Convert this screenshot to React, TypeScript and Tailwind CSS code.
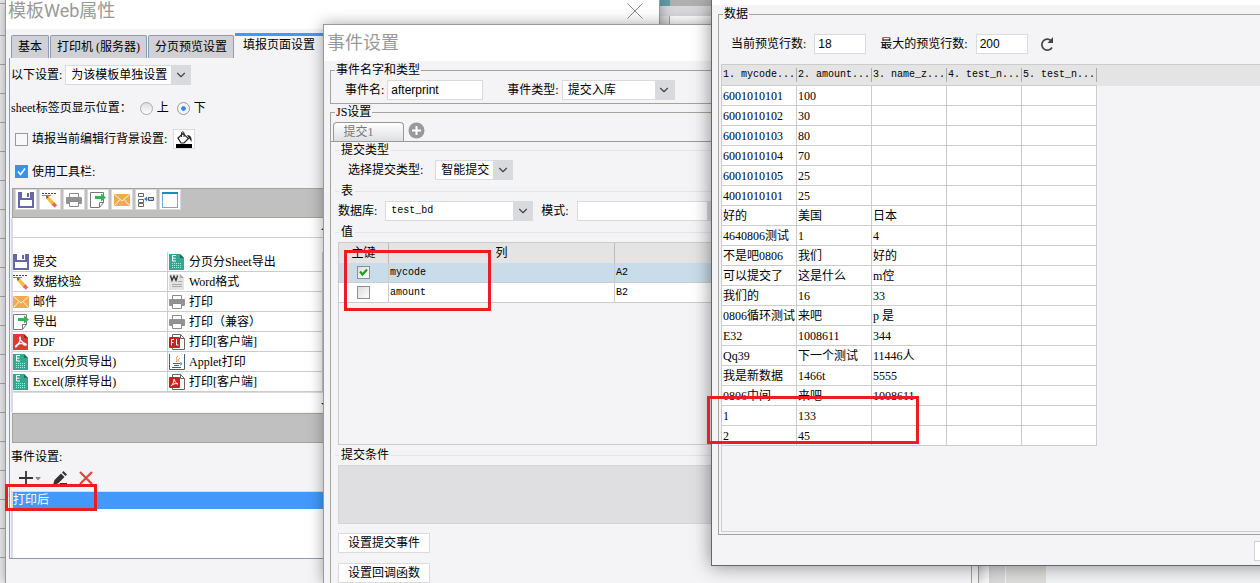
import { ReactNode, useState } from "react";
import { ChevronDown } from "lucide-react";

const ROWS = [
  ["6001010101", "100", ""],
  ["6001010102", "30", ""],
  ["6001010103", "80", ""],
  ["6001010104", "70", ""],
  ["6001010105", "25", ""],
  ["4001010101", "25", ""],
  ["好的", "美国", "日本"],
  ["4640806测试", "1", "4"],
  ["不是吧0806", "我们", "好的"],
  ["可以提交了", "这是什么", "m倥"],
  ["我们的", "16", "33"],
  ["0806循环测试", "来吧", "p 是"],
  ["E32", "1008611", "344"],
  ["Qq39", "下一个测试", "11446人"],
  ["我是新数据", "1466t", "5555"],
  ["0806中间", "来吧", "1008611"],
  ["1", "133", ""],
  ["2", "45", ""],
];

const COLUMNS = ["1. mycode...", "2. amount...", "3. name_z...", "4. test_n...", "5. test_n..."];

const SaveIcon = () => (
  <svg width="16" height="16" viewBox="0 0 16 16" shapeRendering="crispEdges">
    <path d="M0 0h16v16H0z" fill="#6667ab" />
    <path d="M4 0h8v6H4zM2 8h12v6H2z" fill="#fff" />
    <path d="M9 1h2v4H9z" fill="#6667ab" />
  </svg>
);

const VerifyIcon = () => (
  <svg width="16" height="16" viewBox="0 0 16 16">
    <path d="M0 1.500h15" stroke="#444" strokeDasharray="2 1" />
    <path d="M0 3.500h9" stroke="#3f94ee" />
    <path d="M4 4l3 .6 6.500 7-2.800 2.600L4.600 7z" fill="#f6bd45" />
    <path d="M4 4l3 .6L4.600 7z" fill="#555" />
    <path d="M12.200 10.300l3 3-2.400 2.400-3-3z" fill="#e9675c" />
  </svg>
);

const PrintIcon = () => (
  <svg width="16" height="16" viewBox="0 0 16 16">
    <path d="M3.500 6V1.500h9V6" fill="#fff" stroke="#8b8b8b" />
    <rect y="5" width="16" height="7" rx="1" fill="#929292" />
    <path d="M3.500 9.500h9v5h-9z" fill="#fff" stroke="#8b8b8b" />
  </svg>
);

const ExportIcon = () => (
  <svg width="16" height="16" viewBox="0 0 16 16">
    <path d="M.5.5h13v10l-4 5H.5z" fill="#fff" stroke="#777" />
    <path d="M9.500 15v-4.500h4" fill="none" stroke="#777" />
    <path d="M5 4h6V1.500L16 5.500 11 9.500V7H5z" fill="#3cb054" />
  </svg>
);

const MailIcon = () => (
  <svg width="16" height="16" viewBox="0 0 16 16">
    <rect y="2" width="16" height="12" fill="#eeac50" />
    <path d="M.5 2.500L8 9l7.500-6.500M.5 13.500L6 7.500M15.500 13.500L10 7.500" fill="none" stroke="#fff3dc" />
  </svg>
);

const TreeIcon = () => (
  <svg width="16" height="16" viewBox="0 0 16 16">
    <path d="M.5 1.500h5v3h-5zM.5 7.500h5v3h-5zM.5 11.500h5v3h-5z" fill="#fff" stroke="#666" />
    <path d="M10.500 5.500h5v3h-5z" fill="#a9d3fa" stroke="#555" />
    <path d="M10 7H7" stroke="#2c86ea" />
    <path d="M6 7l3-2.500v5z" fill="#2c86ea" />
  </svg>
);

const WindowIcon = () => (
  <svg width="16" height="16" viewBox="0 0 16 16" shapeRendering="crispEdges">
    <path d="M.5.5h15v15H.5z" fill="#fff" stroke="#72aecb" />
    <path d="M0 0h16v2H0z" fill="#198cbe" />
  </svg>
);

const PdfIcon = () => (
  <svg width="16" height="16" viewBox="0 0 16 16">
    <path d="M0 0h11l4 4v12H0z" fill="#d93b36" />
    <path d="M11 0l4 4h-4z" fill="#972421" />
    <path d="M7 3c-2 1 2 6 6 7 1 1-1 2-3 0-2-1-5 0-7 3-1 0-1-1 2-3 2-2 3-6 2-7z" fill="none" stroke="#fff" strokeWidth="1.200" />
  </svg>
);

const ExcelIcon = () => (
  <svg width="16" height="16" viewBox="0 0 16 16">
    <path d="M0 0h11l4 4v12H0z" fill="#37a68e" />
    <path d="M11 0l4 4h-4z" fill="#1c6f5e" />
    <path d="M7 1.500H3.500v5.500H7M3.500 4.200h3" fill="none" stroke="#fff" />
    <path d="M3 9.500h10M3 11.500h10M3 13.500h10" stroke="#b9e5da" strokeDasharray="1 1" />
  </svg>
);

const WordIcon = () => (
  <svg width="16" height="16" viewBox="0 0 16 16">
    <path d="M0 0h11l4 4v12H0z" fill="#e2e2e2" />
    <path d="M11 0l4 4h-4z" fill="#aaa" />
    <path d="M1.500 1.500l1.500 5 2-4.500 2 4.500 1.500-5" fill="none" stroke="#333" strokeWidth="1.300" />
    <path d="M9 7.500h4M3 10.500h10M3 12.500h10" stroke="#aaa" />
  </svg>
);

const FlashIcon = () => (
  <svg width="16" height="16" viewBox="0 0 16 16">
    <path d="M3.500.5h8l4 4v11h-12z" fill="#fff" stroke="#666" />
    <path d="M11.500.5v4h4" fill="none" stroke="#666" />
    <rect y="3" width="11" height="11" rx="1" fill="#c9211e" />
    <path d="M5 5.500H2.500v6M2.500 8.500h2M7.500 5v6h2" fill="none" stroke="#fff" />
  </svg>
);

const PdfPageIcon = () => (
  <svg width="16" height="16" viewBox="0 0 16 16">
    <path d="M3.500.5h8l4 4v11h-12z" fill="#fff" stroke="#666" />
    <path d="M11.500.5v4h4" fill="none" stroke="#666" />
    <rect y="3" width="11" height="11" rx="1" fill="#c9211e" />
    <path d="M5 5c1 3 2 4 4 5-3-1-5 0-7 2 2-2 3-4 3-7z" fill="none" stroke="#fff" />
  </svg>
);

const JavaIcon = () => (
  <svg width="16" height="16" viewBox="0 0 16 16">
    <path d="M.5 0v15.500h15V0" fill="#fff" stroke="#41627e" />
    <path d="M9 2c-4 3 1 3-2 6M11 4c-3 2-1 2-2 4" fill="none" stroke="#e48a3c" />
    <path d="M4 9.500h7M5 11.500h5M3 13.500h9M11 9c2.500-.5 2 2 0 2" fill="none" stroke="#41627e" />
  </svg>
);

const BucketIcon = () => (
  <svg width="18" height="17" viewBox="0 0 18 17">
    <path d="M3 7l5-4.500 5.500 5L9 12H6z" fill="#fff" stroke="#222" strokeWidth="1.200" />
    <path d="M6.500 6V1.500Q8 0 9 1.500V6" fill="none" stroke="#222" />
    <path d="M12 4c4 0 5 3 4.500 7L14 7z" fill="#222" />
    <path d="M1 13h16v4H1z" fill="#000" />
  </svg>
);

const TOOLS: [string, ReactNode][] = [
  ["提交", <SaveIcon />],
  ["数据校验", <VerifyIcon />],
  ["打印", <PrintIcon />],
  ["导出", <ExportIcon />],
  ["邮件", <MailIcon />],
  ["树", <TreeIcon />],
  ["窗口", <WindowIcon />],
];

const WIDGETS: [ReactNode, string, ReactNode, string][] = [
  [<SaveIcon />, "提交", <ExcelIcon />, "分页分Sheet导出"],
  [<VerifyIcon />, "数据校验", <WordIcon />, "Word格式"],
  [<MailIcon />, "邮件", <PrintIcon />, "打印"],
  [<ExportIcon />, "导出", <PrintIcon />, "打印（兼容）"],
  [<PdfIcon />, "PDF", <FlashIcon />, "打印[客户端]"],
  [<ExcelIcon />, "Excel(分页导出)", <JavaIcon />, "Applet打印"],
  [<ExcelIcon />, "Excel(原样导出)", <PdfPageIcon />, "打印[客户端]"],
];

interface SelectProps {
  id: string;
  value: string;
  className: string;
}

const Select = ({ id, value, className }: SelectProps) => (
  <div className={`flex h-5 border border-[#d9dadd] bg-white ${className}`}>
    <select id={id} className="min-w-0 flex-1 appearance-none bg-transparent pl-[5px] outline-none">
      <option>{value}</option>
    </select>
    <span className="flex w-[19px] shrink-0 items-center justify-center bg-[#d9dadd]">
      <ChevronDown size={14} color="#444" />
    </span>
  </div>
);

const Heading = ({ children, className = "" }: { children: ReactNode; className?: string }) => (
  <div className={`flex h-4 items-center gap-0.5 pl-1 ${className}`}>
    <span className="h-px w-1 bg-[#e3e4e7]" />
    <h3>{children}</h3>
    <span className="h-px flex-1 bg-[#e3e4e7]" />
  </div>
);

const TemplateWindow = () => (
  <section className="absolute top-0 left-[5px] min-h-full w-[655px] border-x border-[#999] bg-[#f4f4f7] shadow-[0_0_12px_rgba(0,0,0,0.35)]">
    <header className="flex h-[29px] justify-between bg-white pr-4 pl-0.5">
      <h1 className="text-[18px] leading-[22px] text-[#999] font-['Roboto','Noto_Sans_CJK_SC',sans-serif]">模板Web属性</h1>
      <button aria-label="关闭" className="flex h-[22px] items-center">
        <svg width="16" height="16" viewBox="0 0 16 16" stroke="#888">
          <path d="M.5.5l15 15M15.500.5l-15 15" />
        </svg>
      </button>
    </header>
    <nav className="flex items-end gap-px pt-1 pl-[5px]">
      {["基本", "打印机 (服务器)", "分页预览设置"].map((tab) => (
        <button
          key={tab}
          className="h-[23px] rounded-t-xs border border-b-0 border-[#8b9bb3] bg-[#d1d1d5] px-1.5"
        >
          {tab}
        </button>
      ))}
      <button className="flex h-[25px] flex-1 border-t-3 border-[#4299f5] px-2 pt-px">填报页面设置</button>
    </nav>
    <div className="ml-[3px] border-b border-l border-[#8b9bb3] pt-px pl-px">
      <div className="flex h-8 items-center gap-[3px]">
        <label htmlFor="scope">以下设置:</label>
        <Select id="scope" value="为该模板单独设置" className="w-[126px]" />
      </div>
      <div className="flex h-8 items-center gap-2 pt-0.5">
        <span>sheet标签页显示位置：</span>
        <label className="flex items-center gap-1">
          <input
            type="radio"
            name="place"
            className="size-[13px] appearance-none rounded-full border border-[#aaa] bg-linear-to-b from-[#ddd] to-white"
          />
          上
        </label>
        <label className="flex items-center gap-1">
          <input
            type="radio"
            name="place"
            defaultChecked
            className="size-[13px] appearance-none rounded-full border border-[#999] bg-radial from-[#2f89ed] from-25% to-[#f4f4f7] to-35%"
          />
          下
        </label>
      </div>
      <div className="flex h-8 items-center pl-1">
        <input id="rowbg" type="checkbox" className="size-[13px] appearance-none border border-[#999] bg-[#f8f8fa]" />
        <label htmlFor="rowbg" className="pl-1">
          填报当前编辑行背景设置:
        </label>
        <button aria-label="背景颜色" className="ml-1.5 flex h-5 w-[22px] items-center justify-center border border-[#d9dadd] bg-white">
          <BucketIcon />
        </button>
      </div>
      <div className="flex h-8 items-center pt-px pl-1">
        <span className="relative flex">
          <input id="toolbar" type="checkbox" defaultChecked className="size-[13px] appearance-none bg-[#3592ee]" />
          <svg className="pointer-events-none absolute inset-0" width="13" height="13" viewBox="0 0 13 13">
            <path d="M3 6.500l2.500 3L10 3.500" fill="none" stroke="#fff" strokeWidth="1.600" />
          </svg>
        </span>
        <label htmlFor="toolbar" className="pl-1">
          使用工具栏:
        </label>
      </div>
      <div className="mt-px ml-px flex h-[30px] gap-[2px] border border-[#a4a496] bg-[#c0c0c0] pl-0.5">
        {TOOLS.map(([name, icon]) => (
          <button
            key={name}
            aria-label={name}
            className="flex h-[21px] w-[22px] items-center justify-center border border-[#d9dadd] bg-white"
          >
            {icon}
          </button>
        ))}
      </div>
      <div className="border-l-2 border-[#dcdce0] bg-white">
        <div className="flex h-5 items-center border-b border-[#d0d0d0]">
          <svg className="ml-[308px]" width="8" height="4" viewBox="0 0 8 4">
            <path d="M0 4l4-4 4 4z" fill="#333" />
          </svg>
        </div>
        <table className="mt-[14px] w-[310px] table-fixed border-separate border-spacing-0">
          <tbody>
            {WIDGETS.map(([leftIcon, left, rightIcon, right]) => (
              <tr key={left}>
                <td className="h-5 border-r border-b border-[#ccc] p-0">
                  <div className="flex items-center gap-1 leading-4">
                    {leftIcon}
                    {left}
                  </div>
                </td>
                <td className="h-5 border-r border-b border-[#ccc] p-0">
                  <div className="flex items-center gap-1 pl-px leading-4">
                    {rightIcon}
                    {right}
                  </div>
                </td>
              </tr>
            ))}
          </tbody>
        </table>
        <div className="flex h-5 items-center border-t border-[#dcdce0]">
          <svg className="mt-1 ml-[308px]" width="8" height="4" viewBox="0 0 8 4">
            <path d="M0 0l4 4 4-4z" fill="#333" />
          </svg>
        </div>
      </div>
      <div className="mt-px ml-px h-[30px] border border-[#a4a496] bg-[#c0c0c0]" />
      <h2 className="flex h-7 items-center">事件设置:</h2>
      <div className="flex h-5 items-start gap-[11px] pl-2">
        <button aria-label="添加" className="flex items-center">
          <svg width="23" height="14" viewBox="0 0 23 14">
            <path d="M7 0v14M0 7h14" stroke="#333" strokeWidth="1.800" />
            <path d="M16 6h6l-3 3.500z" fill="#888" />
          </svg>
        </button>
        <button aria-label="编辑">
          <svg width="15" height="14" viewBox="0 0 15 14">
            <path d="M0 14l1.500-5L8 2.500l3.500 3.500L5 12.500zM9 1.500L10.500 0 14 3.500 12.500 5zM7 12h7v2H6z" fill="#333" />
          </svg>
        </button>
        <button aria-label="删除">
          <svg width="14" height="14" viewBox="0 0 14 14">
            <path d="M1 1l12 12M13 1L1 13" stroke="#e8413c" strokeWidth="2.200" />
          </svg>
        </button>
      </div>
      <ul className="h-[67px] border-t border-l-2 border-[#dcdce0] bg-white">
        <li className="bg-[#4299f9] leading-[17px] text-white">打印后</li>
      </ul>
    </div>
  </section>
);

const EventWindow = () => {
  const [keys, setKeys] = useState([true, false]);
  const fields = [
    { name: "mycode", cell: "A2" },
    { name: "amount", cell: "B2" },
  ];

  return (
    <section className="absolute top-6 bottom-0 left-[323px] w-[656px] border border-b-0 border-[#999] bg-[#f4f4f7] shadow-[0_0_14px_rgba(0,0,0,0.35)]">
      <header className="flex h-9 items-center bg-white pl-[3px]">
        <h1 className="text-[18px] leading-[22px] text-[#999] font-['Roboto','Noto_Sans_CJK_SC',sans-serif]">事件设置</h1>
      </header>
      <div className="h-full px-1.5 pt-px">
        <fieldset className="border border-[#a4a496] pb-[3px]">
          <legend className="ml-1 px-px">事件名字和类型</legend>
          <div className="flex items-center pt-0.5 pl-3.5">
            <label htmlFor="event">事件名:</label>
            <input
              id="event"
              defaultValue="afterprint"
              className="ml-[3px] h-5 w-24 border border-[#d9dadd] bg-white px-[3px] outline-none font-['Liberation_Sans',sans-serif]"
            />
            <label htmlFor="kind" className="ml-6">
              事件类型:
            </label>
            <Select id="kind" value="提交入库" className="ml-[3px] w-[113px]" />
          </div>
        </fieldset>
        <fieldset className="h-full border border-[#a4a496]">
          <legend className="ml-1 px-px">JS设置</legend>
          <div className="flex gap-1 border-b border-[#999] pt-0.5 pl-0.5">
            <button className="h-[19px] w-[71px] rounded-t-sm border border-b-0 border-[#999] bg-linear-to-b from-white to-[#dedfe2] pr-5 text-[#777]">
              提交1
            </button>
            <button aria-label="新增" className="h-4">
              <svg width="17" height="17" viewBox="0 0 17 17">
                <circle cx="8.500" cy="8.500" r="8" fill="#999" />
                <path d="M8.500 4v9M4 8.500h9" stroke="#fff" strokeWidth="2" />
              </svg>
            </button>
          </div>
          <Heading>提交类型</Heading>
          <div className="flex h-6 items-center gap-3 pl-[17px]">
            <label htmlFor="submit">选择提交类型:</label>
            <Select id="submit" value="智能提交" className="w-[78px]" />
          </div>
          <Heading className="mt-px">表</Heading>
          <div className="flex h-6 items-center gap-2 pl-[7px]">
            <label htmlFor="db">数据库:</label>
            <Select id="db" value="test_bd" className="w-[148px] text-[10px] font-['Liberation_Mono',monospace]" />
            <label htmlFor="mode">模式:</label>
            <Select id="mode" value="" className="w-[150px]" />
          </div>
          <Heading className="mt-px">值</Heading>
          <div className="mt-0.5 ml-[7px] h-[203px] border border-[#ccc]">
            <table className="w-full table-fixed border-separate border-spacing-0">
              <thead className="bg-[#e4e4e4]">
                <tr>
                  <th className="h-5 w-[50px] border-r border-[#bbb] p-0 font-normal">主键</th>
                  <th className="w-[226px] border-r border-[#bbb] p-0 font-normal">列</th>
                  <th className="p-0" />
                </tr>
              </thead>
              <tbody className="font-['Liberation_Mono',monospace] text-[10px]">
                {fields.map((field, i) => (
                  <tr key={field.name} className={i === 0 ? "bg-[#c8dce9]" : "bg-white"}>
                    <td className="h-5 border-r border-b border-[#ccc] p-0">
                      <span className="relative mx-auto flex size-[13px]">
                        <input
                          type="checkbox"
                          aria-label={field.name}
                          checked={keys[i]}
                          onChange={() => setKeys(keys.map((k, j) => (j === i ? !k : k)))}
                          className="size-[13px] appearance-none border border-[#8f8f8f] bg-linear-to-br from-[#ddd] to-white"
                        />
                        {keys[i] && (
                          <svg className="pointer-events-none absolute inset-0" width="13" height="13" viewBox="0 0 13 13">
                            <path d="M3 5.500l2.500 3L10 3.500" fill="none" stroke="#21a121" strokeWidth="2.200" />
                          </svg>
                        )}
                      </span>
                    </td>
                    <td className="border-r border-b border-[#ccc] px-px py-0">{field.name}</td>
                    <td className="border-b border-[#ccc] px-px py-0">{field.cell}</td>
                  </tr>
                ))}
              </tbody>
            </table>
          </div>
          <Heading className="mt-0.5">提交条件</Heading>
          <div className="mt-0.5 ml-[7px] h-[59px] border border-[#d4d5d8] bg-[#dfdfe1]" />
          <div className="mt-[9px] ml-[7px] flex flex-col items-start gap-2.5">
            <button className="h-5 border border-[#d9dadd] bg-white px-[9px]">设置提交事件</button>
            <button className="h-5 border border-[#d9dadd] bg-white px-[9px]">设置回调函数</button>
          </div>
        </fieldset>
      </div>
    </section>
  );
};

const DataWindow = () => (
  <section className="absolute top-0 left-[711px] -right-[72px] border-b border-l border-[#666] bg-[#f4f4f7] shadow-[0_0_18px_rgba(0,0,0,0.45)]">
    <div className="h-[5px] bg-white" />
    <fieldset className="mx-1.5 mt-px border border-[#a4a496] pb-0.5 pl-0.5">
      <legend className="ml-0.5 px-px">数据</legend>
      <div className="flex items-center pt-3 pl-2.5">
        <label htmlFor="current">当前预览行数:</label>
        <input
          id="current"
          defaultValue="18"
          className="ml-2 h-5 w-[52px] border border-[#d9dadd] bg-white px-[3px] outline-none font-['Liberation_Sans',sans-serif]"
        />
        <label htmlFor="max" className="ml-3.5">
          最大的预览行数:
        </label>
        <input
          id="max"
          defaultValue="200"
          className="ml-2 h-5 w-[52px] border border-[#d9dadd] bg-white px-[3px] outline-none font-['Liberation_Sans',sans-serif]"
        />
        <button aria-label="刷新" className="ml-3">
          <svg width="14" height="15" viewBox="0 0 14 15">
            <path d="M11 3.500A5.500 5.500 0 1 0 12 10.500" fill="none" stroke="#444" strokeWidth="1.700" />
            <path d="M13 0v6H7.500z" fill="#444" />
          </svg>
        </button>
      </div>
      <div className="mt-2.5 flex h-[468px] items-start border-t border-b border-l border-[#ccc]">
        <table className="w-[375px] table-fixed border-separate border-spacing-0">
          <thead className="bg-[#e4e4e4] font-['Liberation_Mono',monospace] text-[10px]">
            <tr>
              {COLUMNS.map((column) => (
                <th key={column} className="h-[21px] border-b border-[#ccc] p-0 text-left font-normal whitespace-nowrap">
                  <div className="border-r border-[#aaa] pl-px leading-[14px]">{column}</div>
                </th>
              ))}
            </tr>
          </thead>
          <tbody className="bg-white">
            {ROWS.map((row) => (
              <tr key={row[0]}>
                {COLUMNS.map((column, i) => (
                  <td key={column} className="h-5 border-r border-b border-[#ccc] py-0 pr-0 pl-px whitespace-nowrap">
                    {row[i]}
                  </td>
                ))}
              </tr>
            ))}
          </tbody>
        </table>
        <div className="h-[21px] flex-1 bg-[#e4e4e4]" />
      </div>
    </fieldset>
    <footer className="mt-1.5 mb-1 flex justify-end pr-1.5">
      <button aria-label="确定" className="h-5 w-[72px] border border-[#d0d0d4] bg-white" />
    </footer>
  </section>
);

// Sheet and toolbar of the designer that stay visible behind the windows
const Backdrop = () => (
  <div className="flex min-h-screen">
    <div className="w-[5px] bg-[#f0f0f2] bg-[repeating-linear-gradient(to_bottom,transparent_0_28px,#aaa_28px_29px)] bg-position-[0_7px]" />
    <div className="flex flex-1 flex-col">
      <div className="flex h-1.5 bg-[#b0b0b0] pl-[655px]">
        <span className="w-2.5 bg-[#609ca8]" />
      </div>
      <div className="h-2.5 bg-[#d8d8dc]" />
      <div className="flex h-4 bg-white pl-[655px]">
        <span className="w-2.5 border-r border-[#aaa] bg-[#e4e4e6]" />
      </div>
      <div className="flex flex-1 bg-[#f2f4f5] pl-[974px]">
        <span className="w-2.5 bg-white" />
        <span className="mr-px w-4 bg-[#dadada]" />
        <span className="w-10 bg-[#dddddb]" />
      </div>
    </div>
  </div>
);

export default function App() {
  return (
    <main className="relative min-h-screen overflow-hidden text-[12px] leading-4 text-black font-['Liberation_Serif','Noto_Sans_CJK_SC',serif]">
      <Backdrop />
      <TemplateWindow />
      <EventWindow />
      <DataWindow />
      <div className="pointer-events-none absolute top-[484px] left-[5px] h-[27px] w-[92px] border-3 border-[#ed1c24]" />
      <div className="pointer-events-none absolute top-[250px] left-[344px] h-[61px] w-[147px] border-3 border-[#ed1c24]" />
      <div className="pointer-events-none absolute top-[396px] left-[707px] h-[48px] w-[212px] border-3 border-[#ed1c24]" />
    </main>
  );
}
